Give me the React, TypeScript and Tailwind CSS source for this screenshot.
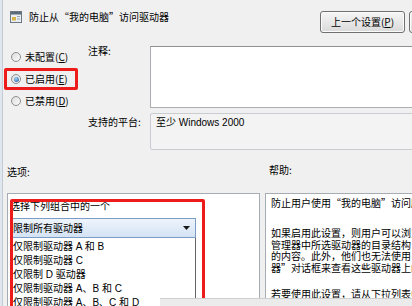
import type { ReactNode } from "react";

const helpParas: string[][] = [
  ["防止用户使用“我的电脑”访问所选驱动器的内容。"],
  [
    "如果启用此设置，则用户可以浏览“我的电脑”或 Windows 资源",
    "管理器中所选驱动器的目录结构，但无法打开文件夹和访问其中",
    "的内容。此外，他们也无法使用“运行”对话框或“映射网络驱动",
    "器”对话框来查看这些驱动器上的目录。",
  ],
  ["若要使用此设置，请从下拉列表中选择驱动器或驱动器组合。"],
];

const driveOptions = [
  "仅限制驱动器 A 和 B",
  "仅限制驱动器 C",
  "仅限制 D 驱动器",
  "仅限制驱动器 A、B 和 C",
  "仅限制驱动器 A、B、C 和 D",
  "仅限制驱动器 A、B 和 C 和 D",
];

const PolicyIcon = () => (
  <svg width="12" height="12" viewBox="0 0 12 12" className="shrink-0">
    <rect x="0.5" y="0.5" width="11" height="11" fill="#e9eef3" stroke="#6b7785" />
    <rect x="1" y="1" width="10" height="2.5" fill="#5a6b7c" />
    <rect x="2" y="6" width="4" height="3.5" fill="#d8b44a" />
    <rect x="7" y="5" width="3" height="1" fill="#9aa6b2" />
    <rect x="7" y="7.5" width="3" height="1" fill="#9aa6b2" />
  </svg>
);

const Radio = ({ label, k, checked }: { label: string; k: string; checked?: boolean }) => (
  <div
    className={`ml-[4px] flex h-[22px] w-[74px] items-center gap-[4px] rounded-[2px] border-[3px] pl-[4px] ${
      checked ? "border-[#ee1b1b]" : "border-transparent"
    }`}
  >
    <span className="flex h-[10px] w-[10px] shrink-0 items-center justify-center rounded-full border border-[#8f8f8f] bg-linear-to-br from-[#dcdcdc] to-[#fbfbfb]">
      {checked && (
        <span className="h-[5px] w-[5px] rounded-full bg-[radial-gradient(circle_at_40%_35%,#9fd0f3,#1d5a9a)]" />
      )}
    </span>
    <span className="whitespace-nowrap leading-[14px]">
      {label}(<u>{k}</u>)
    </span>
  </div>
);

const Button = ({ children }: { children: ReactNode }) => (
  <div className="flex h-[22px] w-[85px] shrink-0 items-center justify-center rounded-[3px] border border-[#707070] bg-linear-to-b from-[#f6f6f6] to-[#dadada] leading-[14px] shadow-[inset_0_0_0_1px_#fcfcfc]">
    {children}
  </div>
);

export default function App() {
  return (
    <div className="relative h-[306px] w-[412px] overflow-hidden bg-[#f0f0f0] font-['Noto_Sans_CJK_SC','Liberation_Sans',sans-serif] text-[10px] text-black">
      {/* header */}
      <div className="flex h-[44px]">
        <div className="flex h-fit w-[320px] shrink-0 items-center gap-[7px] pl-[10px] pt-[10px]">
          <PolicyIcon />
          <span className="whitespace-nowrap leading-[14px]">防止从“我的电脑”访问驱动器</span>
        </div>
        <div className="flex shrink-0 gap-[4px] pt-[11px]">
          <Button>
            上一个设置(<u>P</u>)
          </Button>
          <Button>
            下一个设置(<u>N</u>)
          </Button>
        </div>
      </div>

      {/* state + comment */}
      <div className="flex h-[106px]">
        <div className="w-[88px] shrink-0 pt-[2px]">
          <Radio label="未配置" k="C" />
          <Radio label="已启用" k="E" checked />
          <Radio label="已禁用" k="D" />
        </div>
        <div className="flex w-[330px] shrink-0 flex-col">
          <div className="flex h-[64px]">
            <div className="w-[62px] shrink-0 leading-[14px]">注释:</div>
            <div className="mt-[2px] h-[62px] flex-1 border border-[#abadb3] border-t-[#8e8f93] bg-white" />
          </div>
          <div className="mt-[5px] flex">
            <div className="w-[62px] shrink-0 whitespace-nowrap pt-[2px] leading-[14px]">支持的平台:</div>
            <div className="h-[37px] flex-1 rounded-[2px] border border-[#c9cdd2] bg-[#f3f3f3] pl-[5px] pt-[2px] font-['Liberation_Sans','Noto_Sans_CJK_SC',sans-serif] leading-[14px]">
              至少 Windows 2000
            </div>
          </div>
        </div>
      </div>

      {/* section labels */}
      <div className="flex h-[43px]">
        <div className="w-[269px] shrink-0 pl-[7px] pt-[15px] leading-[14px]">选项:</div>
        <div className="pt-[13px] leading-[14px]">帮助:</div>
      </div>

      {/* panels */}
      <div className="flex gap-[5px] pl-[7px]">
        <div className="relative h-[130px] w-[253px] shrink-0 border border-[#a6acb4] bg-white pl-[2px] pt-[6px]">
          <div className="whitespace-nowrap leading-[12px]">选择下列组合中的一个</div>
          <div className="mt-[6px] flex h-[20px] w-[186px] items-center justify-between border border-[#7a9cc6] bg-linear-to-b from-[#eef4fb] to-[#d4e3f4] pl-[2px] pr-[5px]">
            <span className="leading-[14px]">限制所有驱动器</span>
            <svg width="7" height="4" viewBox="0 0 7 4">
              <path d="M0 0H7L3.5 4Z" fill="#1a1a1a" />
            </svg>
          </div>
          <div className="w-[186px] border border-t-0 border-[#646464] bg-white pl-[2px] pt-[2px] font-['Liberation_Sans','Noto_Sans_CJK_SC',sans-serif]">
            {driveOptions.map((o) => (
              <div key={o} className="h-[14px] whitespace-nowrap leading-[14px]">
                {o}
              </div>
            ))}
          </div>
          <div className="absolute left-[2px] top-[5px] h-[200px] w-[195px] rounded-[2px] border-[3px] border-[#ee1b1b]" />
        </div>
        <div className="h-[130px] w-[200px] shrink-0 overflow-hidden border border-[#a6acb4] bg-white pl-[5px] pt-[3px]">
          {helpParas.map((p, i) => (
            <div key={i} className={i === 1 ? "mt-[19px]" : i === 2 ? "mt-[15px]" : ""}>
              {p.map((line) => (
                <div key={line} className="whitespace-nowrap leading-[11.4px]">
                  {line}
                </div>
              ))}
            </div>
          ))}
        </div>
      </div>

      {/* window frame edge and bar below */}
      <div className="absolute bottom-0 left-0 top-0 w-[3px] border-r border-[#c3ccd6] bg-[#dfe6ee]" />
      <div className="absolute bottom-0 left-[160px] right-0 top-[298px] border-t border-[#cfcfcf] bg-[#ebebeb]" />
    </div>
  );
}
